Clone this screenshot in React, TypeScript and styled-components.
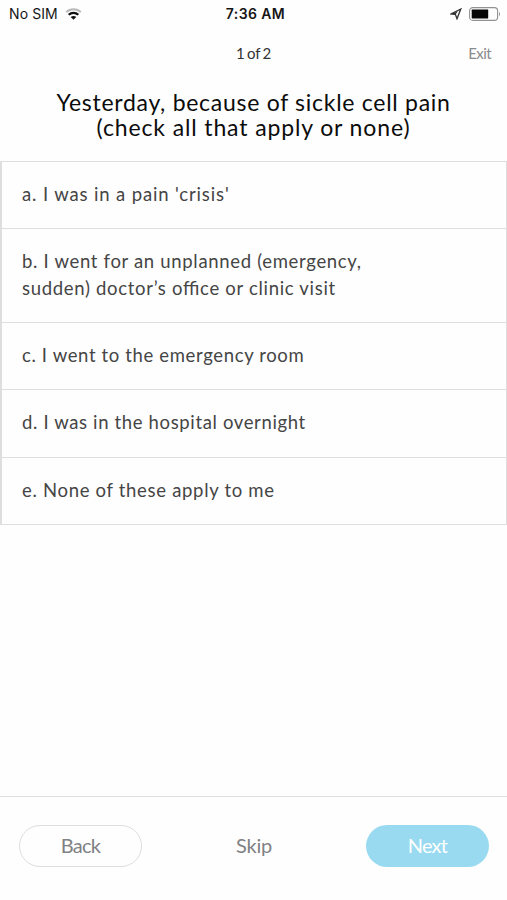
import React from "react";
import styled, { createGlobalStyle } from "styled-components";

const GlobalStyle = createGlobalStyle`
  * { box-sizing: border-box; }
  body { margin: 0; background: #fefefe; }
  button { font: inherit; margin: 0; padding: 0; background: none; border: 0; }
`;

const Screen = styled.main`
  display: flex;
  flex-direction: column;
  width: 507px;
  height: 900px;
  overflow: hidden;
  background: #fefefe;
  color: #111;
  font-family: Lato, sans-serif;
`;

const StatusBar = styled.div`
  display: grid;
  grid-template-columns: 1fr auto 1fr;
  align-items: center;
  height: 28px;
  padding: 0 5px 0 9px;
  font-family: Inter, sans-serif;
  font-size: 14px;
  line-height: 28px;
  color: #161616;
`;

const Carrier = styled.div`
  display: flex;
  align-items: center;
  gap: 7px;
  letter-spacing: 0.1px;
`;

const Clock = styled.div`
  font-weight: 600;
  letter-spacing: 0.4px;
`;

const Indicators = styled.div`
  display: flex;
  align-items: center;
  justify-content: flex-end;
  gap: 7px;
`;

const Header = styled.header`
  display: grid;
  grid-template-columns: 1fr auto 1fr;
  align-items: center;
  height: 50px;
  padding: 0 16px;
  font-size: 15px;
`;

const Progress = styled.span`
  grid-column: 2;
  color: #333;
  letter-spacing: -0.2px;
  word-spacing: -1.2px;
`;

const ExitButton = styled.button`
  justify-self: end;
  color: #8a8a8c;
  letter-spacing: -0.6px;
`;

const Title = styled.h1`
  height: 83px;
  margin: 0;
  padding-top: 12px;
  font-size: 23px;
  font-weight: 400;
  line-height: 25px;
  text-align: center;
  color: #0c0c0c;
`;

const TitleLine = styled.span<{ $spacing: number }>`
  display: block;
  letter-spacing: ${(p) => p.$spacing}px;
`;

const Options = styled.ul`
  margin: 0;
  padding: 0;
  list-style: none;
  border: solid #dedede;
  border-width: 1px 1px 1px 2px;
`;

const Option = styled.li<{ $height: number }>`
  height: ${(p) => p.$height}px;
  padding: 19px 20px;
  font-size: 18.5px;
  line-height: 27px;
  color: #454545;
  font-feature-settings: "liga" 1;

  & + & { border-top: 1px solid #dedede; }
`;

const OptionLine = styled.span<{ $spacing: number }>`
  display: block;
  white-space: nowrap;
  letter-spacing: ${(p) => p.$spacing}px;
`;

const Footer = styled.footer`
  display: flex;
  align-items: flex-start;
  justify-content: space-between;
  height: 104px;
  margin-top: auto;
  padding: 28px 18px 0 19px;
  border-top: 1px solid #dedede;
`;

const NavButton = styled.button<{ $kind: "outline" | "plain" | "filled" }>`
  width: 123px;
  height: 42px;
  border-radius: 21px;
  font-size: 20px;
  line-height: 38px;
  padding-bottom: 2px;
  letter-spacing: ${(p) => (p.$kind === "plain" ? -0.2 : -0.7)}px;
  border: 1px solid ${(p) => (p.$kind === "outline" ? "#dedede" : "transparent")};
  background: ${(p) => (p.$kind === "filled" ? "#99daf0" : "transparent")};
  color: ${(p) => (p.$kind === "filled" ? "#fff" : "#808184")};
`;

const options = [
  { height: 66, lines: [{ text: "a. I was in a pain 'crisis'", spacing: 0.86 }] },
  {
    height: 94,
    lines: [
      { text: "b. I went for an unplanned (emergency,", spacing: 0.68 },
      { text: "sudden) doctor’s office or clinic visit", spacing: 0.69 },
    ],
  },
  { height: 67, lines: [{ text: "c. I went to the emergency room", spacing: 0.64 }] },
  { height: 68, lines: [{ text: "d. I was in the hospital overnight", spacing: 0.64 }] },
  { height: 67, lines: [{ text: "e. None of these apply to me", spacing: 0.69 }] },
];

const WifiIcon = () => (
  <svg width="17" height="12" viewBox="0 0 17 12" fill="none">
    <path d="M1.2 4.2C5.2.2 11.8.2 15.8 4.2" stroke="#b9b9b9" strokeWidth="1.9" />
    <path d="M3.7 6.8C6.4 4.1 10.6 4.1 13.3 6.8" stroke="#111" strokeWidth="2.3" />
    <path d="M5.7 9C7.2 7.5 9.8 7.5 11.3 9L8.5 11.8Z" fill="#111" />
  </svg>
);

const LocationIcon = () => (
  <svg width="12" height="12" viewBox="0 0 12 12" fill="none">
    <path d="M10.8 1L1 6L5.4 6.4L7 10.8Z" stroke="#303030" strokeWidth="1.3" />
    <path d="M1 6L5.4 6.4L8 3.2Z" fill="#303030" />
  </svg>
);

const BatteryIcon = () => (
  <svg width="33" height="14" viewBox="0 0 33 14" fill="none">
    <rect x="0.6" y="0.6" width="28" height="12.8" rx="3.2" stroke="#929292" strokeWidth="1.1" />
    <rect x="2.7" y="2.6" width="16.5" height="8.8" rx="0.6" fill="#050505" />
    <path d="M30 4.7Q32 7 30 9.3Z" fill="#929292" />
  </svg>
);

export default function App() {
  return (
    <Screen>
      <GlobalStyle />
      <StatusBar>
        <Carrier>No SIM <WifiIcon /></Carrier>
        <Clock>7:36 AM</Clock>
        <Indicators><LocationIcon /><BatteryIcon /></Indicators>
      </StatusBar>
      <Header>
        <Progress>1 of 2</Progress>
        <ExitButton>Exit</ExitButton>
      </Header>
      <Title>
        <TitleLine $spacing={0.72}>Yesterday, because of sickle cell pain</TitleLine>
        <TitleLine $spacing={0.87}>(check all that apply or none)</TitleLine>
      </Title>
      <Options>
        {options.map((option) => (
          <Option key={option.lines[0].text} $height={option.height}>
            {option.lines.map((line) => (
              <OptionLine key={line.text} $spacing={line.spacing}>{line.text}</OptionLine>
            ))}
          </Option>
        ))}
      </Options>
      <Footer>
        <NavButton $kind="outline">Back</NavButton>
        <NavButton $kind="plain">Skip</NavButton>
        <NavButton $kind="filled">Next</NavButton>
      </Footer>
    </Screen>
  );
}
